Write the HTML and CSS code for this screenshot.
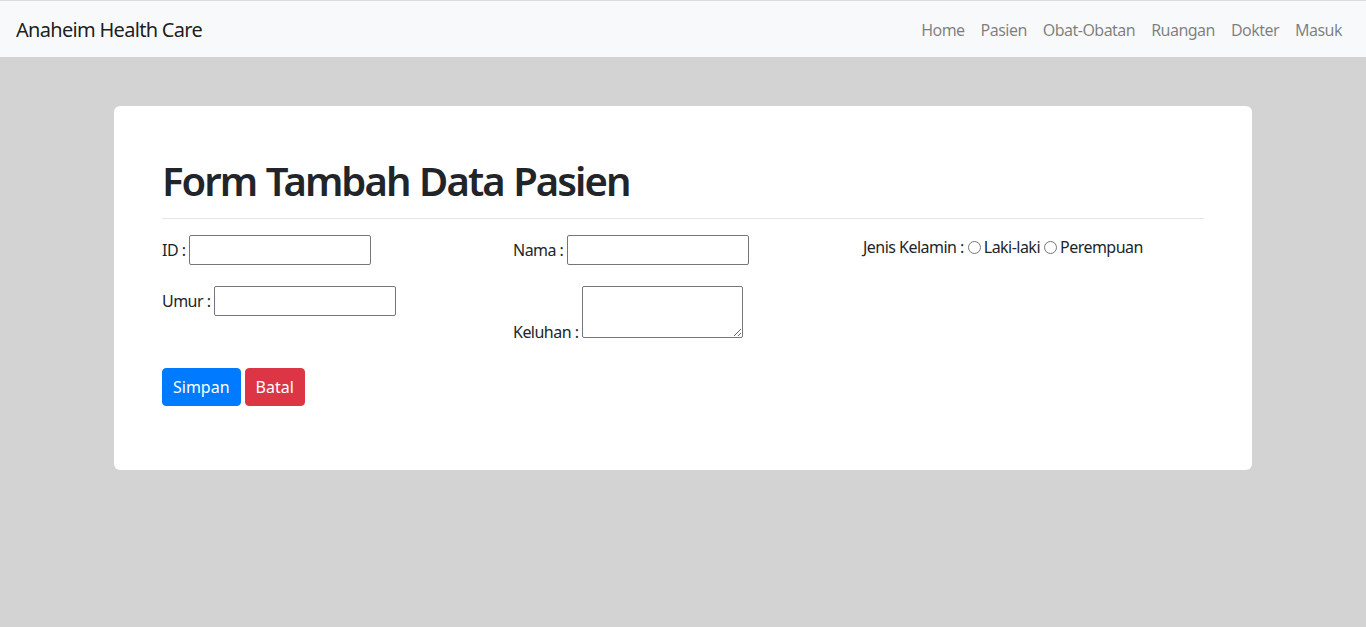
FILE: index.html
```html
<!DOCTYPE html>
<html lang="id">
<head>
<meta charset="utf-8">
<title>Anaheim Health Care</title>
<link rel="stylesheet" href="styles.css">
</head>
<body>
<nav class="navbar">
  <a class="brand" href="#">Anaheim Health Care</a>
  <ul class="nav-links">
    <li><a href="#">Home</a></li>
    <li><a href="#">Pasien</a></li>
    <li><a href="#">Obat-Obatan</a></li>
    <li><a href="#">Ruangan</a></li>
    <li><a href="#">Dokter</a></li>
    <li><a href="#">Masuk</a></li>
  </ul>
</nav>
<main class="container">
  <section class="card">
    <h1 class="title">Form Tambah Data Pasien</h1>
    <hr class="divider">
    <form class="form">
      <div class="cols">
        <div class="col">
          <div class="field">ID : <input type="text" class="inp"></div>
          <div class="field">Umur : <input type="text" class="inp"></div>
        </div>
        <div class="col">
          <div class="field">Nama : <input type="text" class="inp"></div>
          <div class="field">Keluhan : <textarea class="ta"></textarea></div>
        </div>
        <div class="col">
          <div class="field">Jenis Kelamin :<input type="radio" name="jk" class="radio">Laki-laki<input type="radio" name="jk" class="radio">Perempuan</div>
        </div>
      </div>
      <div class="actions">
        <button type="button" class="btn btn-primary">Simpan</button>
        <button type="button" class="btn btn-danger">Batal</button>
      </div>
    </form>
  </section>
</main>
</body>
</html>
```
FILE: styles.css
```css
* { box-sizing: border-box; }
html, body { margin: 0; padding: 0; }
body {
  background: #d3d3d3;
  font-family: "Noto Sans", "Open Sans", sans-serif;
  font-size: 16px;
  line-height: 24px;
  letter-spacing: -0.033em;
  color: #212529;
  border-top: 1px solid #dcdcdc;
  min-height: 627px;
}
.navbar {
  background: #f8f9fa;
  height: 56px;
  padding: 0 16px;
  display: flex;
  align-items: center;
  justify-content: space-between;
}
.brand {
  font-size: 20px;
  line-height: 30px;
  padding-top: 2px;
  letter-spacing: -0.035em;
  color: rgba(0,0,0,.9);
  text-decoration: none;
}
.nav-links {
  list-style: none;
  margin: 0;
  padding: 0;
  display: flex;
}
.nav-links a {
  display: block;
  padding: 10px 8px 8px;
  color: rgba(0,0,0,.5);
  text-decoration: none;
}
.container {
  width: 1138px;
  margin: 49px auto 0;
}
.card {
  background: #fff;
  border-radius: 6px;
  padding: 48px;
}
.title {
  margin: 0;
  padding-top: 3px;
  height: 48px;
  font-size: 40px;
  line-height: 48px;
  font-weight: 600;
  letter-spacing: -0.048em;
  word-spacing: 1px;
}
.divider {
  margin: 16px 0 16px;
  border: 0;
  border-top: 1px solid rgba(0,0,0,.1);
  height: 0;
}
.form { margin: 0; }
.cols {
  display: grid;
  grid-template-columns: 351px 350px 1fr;
}
.field { margin-bottom: 21px; }
.field:last-child { margin-bottom: 0; }
.inp {
  width: 182px;
  height: 30px;
  font: inherit;
  padding: 2px;
  border: 1px solid #767676;
  border-radius: 2px;
  vertical-align: baseline;
}
.ta {
  width: 161px;
  height: 52px;
  font: inherit;
  padding: 2px;
  border: 1px solid #767676;
  border-radius: 2px;
  vertical-align: baseline;
  resize: both;
}
.radio {
  width: 13px;
  height: 13px;
  margin: 0 3px 0 4px;
  vertical-align: -1px;
}
.actions {
  margin: 24px 0 16px;
  display: flex;
  gap: 4px;
}
.btn {
  font: inherit;
  padding: 6px 10px;
  border: 1px solid transparent;
  border-radius: 4px;
  color: #fff;
  cursor: pointer;
}
.btn-primary { background: #007bff; border-color: #007bff; }
.btn-danger { background: #dc3545; border-color: #dc3545; }
```
